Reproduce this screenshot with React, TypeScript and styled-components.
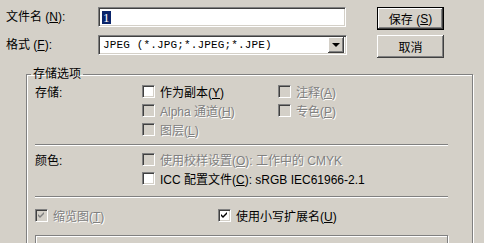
import React from 'react';
import styled, { createGlobalStyle } from 'styled-components';

const GlobalStyle = createGlobalStyle`
  html, body {
    margin: 0;
    padding: 0;
    background: #d4d0c8;
  }
  body {
    font-family: "Liberation Sans", "Noto Sans CJK SC", sans-serif;
    font-size: 12px;
    color: #000;
  }
`;

const Dialog = styled.div`
  width: 484px;
  height: 243px;
  overflow: hidden;
  box-sizing: border-box;
  padding: 7px 0 0 6px;
  background: #d4d0c8;
`;

const Top = styled.div`
  display: grid;
  grid-template-columns: 92px 279px 67px;
  grid-template-rows: 23px 23px;
  row-gap: 5px;
`;

const FieldLabel = styled.div`
  height: 20px;
  display: flex;
  align-items: center;
  line-height: 1;
`;

const Sunken = styled.div`
  box-sizing: border-box;
  height: 20px;
  background: #fff;
  border: 1px solid;
  border-color: #808080 #fff #fff #808080;
  box-shadow: inset 1px 1px 0 #404040, inset -1px -1px 0 #d4d0c8;
  display: flex;
  align-items: center;
`;

const NameInput = styled(Sunken)`
  width: 248px;
  padding-left: 3px;
`;

const Selected = styled.span`
  background: #0a246a;
  color: #fff;
  font-family: "Liberation Serif", serif;
  font-size: 13px;
  line-height: 13px;
  padding: 0 1px;
`;

const FormatSelect = styled(Sunken)`
  width: 249px;
  padding: 0 2px 0 4px;
  justify-content: space-between;
`;

const SelectText = styled.span`
  font-family: "Liberation Mono", monospace;
  font-size: 11px;
  letter-spacing: 0.15px;
`;

const ArrowButton = styled.span`
  width: 16px;
  height: 16px;
  box-sizing: border-box;
  background: #d4d0c8;
  box-shadow: inset -1px -1px 0 #404040, inset 1px 1px 0 #fff,
    inset -2px -2px 0 #808080, inset 2px 2px 0 #d4d0c8;
  display: flex;
  align-items: center;
  justify-content: center;

  &::after {
    content: '';
    border-left: 4px solid transparent;
    border-right: 4px solid transparent;
    border-top: 4px solid #000;
  }
`;

const Button = styled.button<{ $default?: boolean }>`
  width: 67px;
  height: 23px;
  box-sizing: border-box;
  padding: 0;
  margin: 0;
  font: inherit;
  font-size: 12px;
  color: #000;
  background: #d4d0c8;
  border: ${(p) => (p.$default ? '1px solid #000' : 'none')};
  box-shadow: inset -1px -1px 0 #404040, inset 1px 1px 0 #fff,
    inset -2px -2px 0 #808080;
  display: flex;
  align-items: center;
  justify-content: center;
`;

const GroupBox = styled.fieldset`
  margin: 9px 0 0 20px;
  width: 447px;
  box-sizing: border-box;
  padding: 0 24px 0 8px;
  border: 1px solid #808080;
  box-shadow: inset 1px 1px 0 #fff, 1px 1px 0 #fff;
  height: 200px;
`;

const Legend = styled.legend`
  padding: 0 2px;
  margin-left: -4px;
  line-height: 15px;
`;

const Section = styled.div`
  display: grid;
  grid-template-columns: 107px 136px 1fr;
  grid-auto-rows: 19px;
  align-items: center;
`;

const SectionLabel = styled.div`
  grid-column: 1;
`;

const Separator = styled.div<{ $top: number; $bottom: number }>`
  height: 0;
  border-top: 1px solid #808080;
  border-bottom: 1px solid #fff;
  margin: ${(p) => `${p.$top}px 0 ${p.$bottom}px`};
`;

const Option = styled.label<{ $disabled?: boolean; $col?: number }>`
  display: flex;
  align-items: center;
  gap: 5px;
  white-space: nowrap;
  grid-column: ${(p) => p.$col ?? 'auto'};
  color: ${(p) => (p.$disabled ? '#808080' : '#000')};
  text-shadow: ${(p) => (p.$disabled ? '1px 1px 0 #fff' : 'none')};
`;

const Box = styled.span<{ $disabled?: boolean }>`
  width: 13px;
  height: 13px;
  box-sizing: border-box;
  flex: none;
  border: 1px solid;
  border-color: #808080 #fff #fff #808080;
  box-shadow: inset 1px 1px 0 #404040, inset -1px -1px 0 #d4d0c8;
  background: ${(p) => (p.$disabled ? '#d4d0c8' : '#fff')};
  display: flex;
  align-items: center;
  justify-content: center;
  text-shadow: none;
`;

const BottomRow = styled.div`
  display: grid;
  grid-template-columns: 183px 1fr;
  height: 19px;
  align-items: center;
`;

const Panel = styled.div`
  margin-top: 10px;
  height: 40px;
  border: 1px solid #808080;
  box-shadow: inset 1px 1px 0 #fff, 1px 1px 0 #fff;
`;

const Key = ({ k }: { k: string }) => <u>{k}</u>;

const Checkbox = ({
  checked,
  disabled,
  col,
  children,
}: {
  checked?: boolean;
  disabled?: boolean;
  col?: number;
  children: React.ReactNode;
}) => (
  <Option $disabled={disabled} $col={col}>
    <Box $disabled={disabled}>
      {checked && (
        <svg width="7" height="7" viewBox="0 0 7 7">
          <path
            d="M0 2 L2 4 L6 0 L6 2 L2 6 L0 4 Z"
            fill={disabled ? '#808080' : '#000'}
          />
        </svg>
      )}
    </Box>
    <span>{children}</span>
  </Option>
);

export default function App() {
  return (
    <Dialog>
      <GlobalStyle />
      <Top>
        <FieldLabel>
          文件名 (<Key k="N" />):
        </FieldLabel>
        <NameInput>
          <Selected>1</Selected>
        </NameInput>
        <Button $default>
          保存 (<Key k="S" />)
        </Button>
        <FieldLabel>
          格式 (<Key k="F" />):
        </FieldLabel>
        <FormatSelect>
          <SelectText>JPEG (*.JPG;*.JPEG;*.JPE)</SelectText>
          <ArrowButton />
        </FormatSelect>
        <Button>取消</Button>
      </Top>

      <GroupBox>
        <Legend>存储选项</Legend>
        <Section>
          <SectionLabel>存储:</SectionLabel>
          <Checkbox col={2}>
            作为副本(<Key k="Y" />)
          </Checkbox>
          <Checkbox disabled col={3}>
            注释(<Key k="A" />)
          </Checkbox>
          <Checkbox disabled col={2}>
            Alpha 通道(<Key k="H" />)
          </Checkbox>
          <Checkbox disabled col={3}>
            专色(<Key k="P" />)
          </Checkbox>
          <Checkbox disabled col={2}>
            图层(<Key k="L" />)
          </Checkbox>
        </Section>
        <Separator $top={5} $bottom={4} />
        <Section>
          <SectionLabel>颜色:</SectionLabel>
          <Checkbox disabled col={2}>
            使用校样设置(<Key k="O" />): 工作中的 CMYK
          </Checkbox>
          <Checkbox col={2}>
            ICC 配置文件(<Key k="C" />): sRGB IEC61966-2.1
          </Checkbox>
        </Section>
        <Separator $top={8} $bottom={8} />
        <BottomRow>
          <Checkbox checked disabled>
            缩览图(<Key k="T" />)
          </Checkbox>
          <Checkbox checked>
            使用小写扩展名(<Key k="U" />)
          </Checkbox>
        </BottomRow>
        <Panel />
      </GroupBox>
    </Dialog>
  );
}
